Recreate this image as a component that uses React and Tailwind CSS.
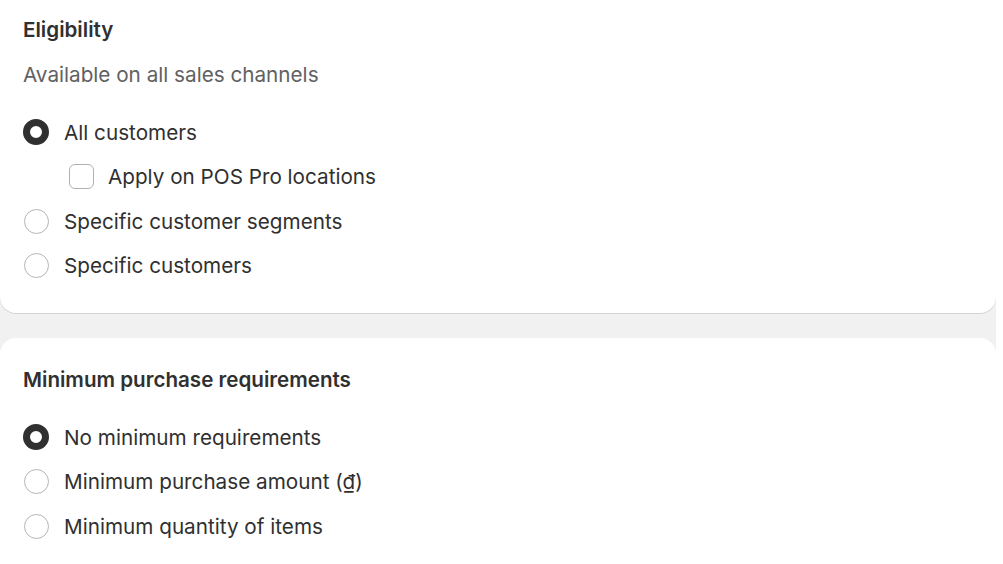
const ELIGIBILITY = [
  { label: 'All customers', checked: true },
  { label: 'Apply on POS Pro locations', checkbox: true },
  { label: 'Specific customer segments' },
  { label: 'Specific customers' },
];

const MINIMUM = [
  { label: 'No minimum requirements', checked: true },
  { label: 'Minimum purchase amount (₫)' },
  { label: 'Minimum quantity of items' },
];

function Radio({ checked }) {
  return checked ? (
    <span className="-ml-px box-border h-[26px] w-[26px] shrink-0 rounded-full border-[7px] border-[#303030] bg-white" />
  ) : (
    <span className="box-border h-[25px] w-[25px] shrink-0 rounded-full border-[1.5px] border-[#b5b5b5] bg-white" />
  );
}

function Row({ item }) {
  if (item.checkbox) {
    return (
      <div className="flex h-[44.5px] items-center gap-[14px] pl-[69px]">
        <span className="box-border h-[25px] w-[25px] shrink-0 rounded-[6px] border-[1.5px] border-[#b0b0b0] bg-white" />
        <span>{item.label}</span>
      </div>
    );
  }
  return (
    <div className="flex h-[44.5px] items-center gap-[15px] pl-6">
      <Radio checked={item.checked} />
      <span>{item.label}</span>
    </div>
  );
}

export default function App() {
  return (
    <div
      className="min-h-screen bg-white text-[20.7px] text-[#303030]"
      style={{ fontFamily: 'Inter, "Noto Sans", sans-serif' }}
    >
      <div className="flex w-[996px] flex-col gap-[25px] bg-[#f1f1f1]">
        <div className="rounded-b-[16px] bg-white pb-[25px] pt-4 shadow-[0_1px_0_#d4d4d4]">
          <h2 className="pl-[23px] text-[20.6px] font-semibold leading-[28px]">Eligibility</h2>
          <p className="mt-[17px] pl-[23px] leading-[28px] text-[#616161]">Available on all sales channels</p>
          <div className="mt-[21px]">
            {ELIGIBILITY.map((item) => (
              <Row key={item.label} item={item} />
            ))}
          </div>
        </div>

        <div className="rounded-t-[16px] bg-white pb-10 pt-[28px]">
          <h2 className="pl-[23px] text-[20.6px] font-semibold leading-[28px]">Minimum purchase requirements</h2>
          <div className="mt-[21px]">
            {MINIMUM.map((item) => (
              <Row key={item.label} item={item} />
            ))}
          </div>
        </div>
      </div>
    </div>
  );
}
